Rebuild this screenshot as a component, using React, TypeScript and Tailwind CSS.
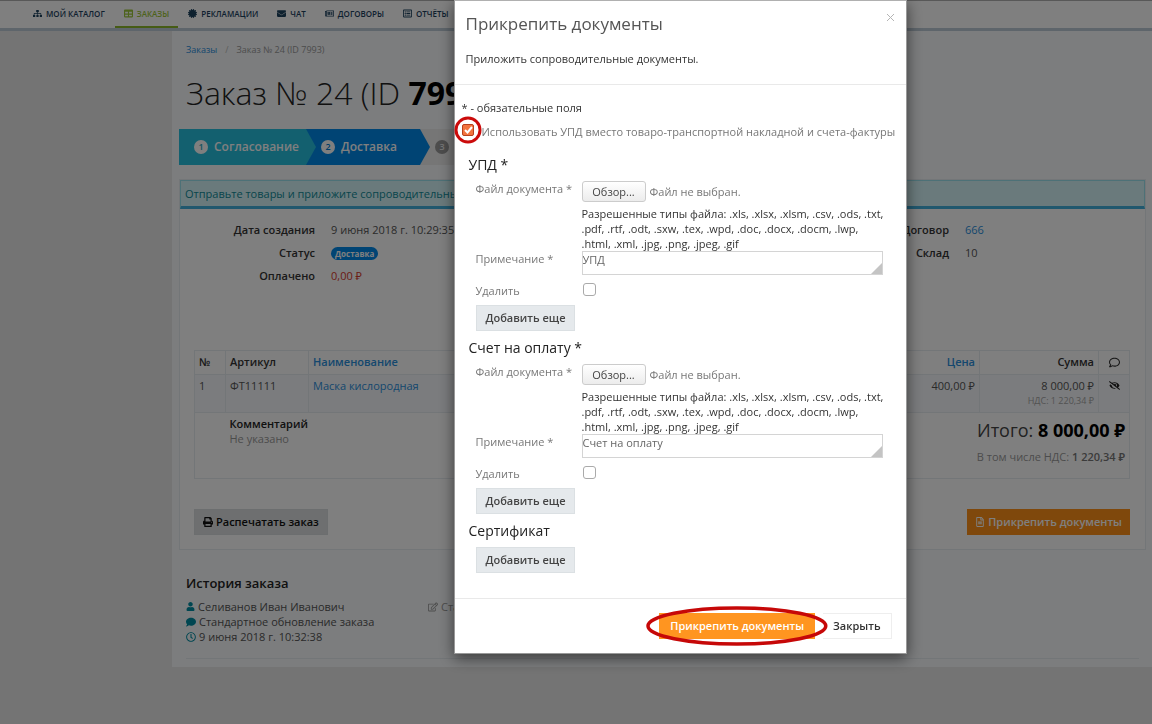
import React, { useRef } from 'react';
import {
  FaSitemap,
  FaTable,
  FaCertificate,
  FaEnvelope,
  FaRegNewspaper,
  FaRegComment,
  FaEyeSlash,
  FaPrint,
  FaRegFileAlt,
  FaUser,
  FaComment,
  FaRegClock,
  FaRegEdit,
  FaRegListAlt,
} from 'react-icons/fa';

const NAV = [
  { label: 'Мой каталог', icon: FaSitemap, active: false },
  { label: 'Заказы', icon: FaTable, active: true },
  { label: 'Рекламации', icon: FaCertificate, active: false },
  { label: 'Чат', icon: FaEnvelope, active: false },
  { label: 'Договоры', icon: FaRegNewspaper, active: false },
  { label: 'Отчёты', icon: FaRegListAlt, active: false },
];

function NavBar() {
  return (
    <nav className="border-t border-[#b0b0b0] border-b-[3px] border-b-[#bccad6] bg-white pl-6">
      <ul className="flex gap-px">
        {NAV.map(({ label, icon: Icon, active }) => (
          <li key={label}>
            <a
              href="#"
              className={
                active
                  ? 'flex h-[27px] items-center gap-1 border-b-2 border-[#8cb82b] px-[9px] text-[8px] font-semibold uppercase text-[#9dc73a]'
                  : 'flex h-[27px] items-center gap-1 border-b-2 border-transparent px-[9px] text-[8px] font-semibold uppercase text-[#1d425f]'
              }
            >
              <Icon className="size-[9px]" />
              {label}
            </a>
          </li>
        ))}
      </ul>
    </nav>
  );
}

function Steps() {
  return (
    <ol className="flex h-9 w-[728px] bg-[#ececec] text-xs font-semibold text-white">
      <li className="relative z-20 flex w-[127px] items-center gap-1.5 bg-[#27c0de] pl-[15px]">
        <span className="flex size-3.5 shrink-0 items-center justify-center rounded-full bg-white text-[9px] text-[#27a6bd]">1</span>
        Согласование
        <svg className="absolute left-full top-0 h-9 w-[10px]" viewBox="0 0 10 36" preserveAspectRatio="none">
          <path d="M0 0L10 18L0 36Z" fill="#27c0de" />
        </svg>
      </li>
      <li className="relative z-10 flex w-[114px] items-center gap-1.5 bg-[#0088e8] pl-[15px]">
        <span className="flex size-3.5 shrink-0 items-center justify-center rounded-full bg-white text-[9px] text-[#0078cf]">2</span>
        Доставка
        <svg className="absolute left-full top-0 h-9 w-[10px]" viewBox="0 0 10 36" preserveAspectRatio="none">
          <path d="M0 0L10 18L0 36Z" fill="#0088e8" />
        </svg>
      </li>
      <li className="flex items-center pl-[15px]">
        <span className="flex size-3.5 shrink-0 items-center justify-center rounded-full bg-[#9a9a9a] text-[9px] text-[#ececec]">3</span>
      </li>
    </ol>
  );
}

function OrderDetails() {
  return (
    <div className="flex justify-between pt-3 pb-[65px]">
      <dl className="grid grid-cols-[135px_auto] gap-x-4 gap-y-[5px] leading-[18px]">
        <dt className="text-right font-semibold text-[#333]">Дата создания</dt>
        <dd>9 июня 2018 г. 10:29:35</dd>
        <dt className="text-right font-semibold text-[#333]">Статус</dt>
        <dd className="flex items-center">
          <span className="rounded-full bg-[#0088e8] px-1 text-[8px] font-bold leading-[13px] text-white">Доставка</span>
        </dd>
        <dt className="text-right font-semibold text-[#333]">Оплачено</dt>
        <dd className="text-[#d63a2c]">0,00 ₽</dd>
      </dl>
      <dl className="grid grid-cols-[auto_180px] content-start gap-x-4 gap-y-[5px] leading-[18px]">
        <dt className="text-right font-semibold text-[#333]">Договор</dt>
        <dd>
          <a href="#" className="text-[#2a8fdc]">
            666
          </a>
        </dd>
        <dt className="text-right font-semibold text-[#333]">Склад</dt>
        <dd>10</dd>
      </dl>
    </div>
  );
}

function OrderTable() {
  return (
    <div className="pr-[15px] pl-[14px]">
      <table className="w-full border-collapse border border-[#e7ecf1] text-left">
        <thead>
          <tr className="h-6 border-b border-[#e7ecf1] text-[#333] [&>th]:border-r [&>th]:border-[#e7ecf1] [&>th]:px-1 [&>th]:font-semibold">
            <th className="w-[31px]">№</th>
            <th className="w-[83px]">Артикул</th>
            <th>
              <a href="#" className="text-[#2a8fdc]">
                Наименование
              </a>
            </th>
            <th className="w-[100px] text-right">
              <a href="#" className="text-[#2a8fdc]">
                Цена
              </a>
            </th>
            <th className="w-[119px] text-right">Сумма</th>
            <th className="w-[31px]">
              <FaRegComment className="mx-auto size-[11px]" />
            </th>
          </tr>
        </thead>
        <tbody>
          <tr className="h-[38px] bg-[#f7f9fc] align-top leading-[15px] [&>td]:border-r [&>td]:border-[#e7ecf1] [&>td]:px-1 [&>td]:pt-[3px]">
            <td>1</td>
            <td>ФТ11111</td>
            <td>
              <a href="#" className="text-[#2a8fdc]">
                Маска кислородная
              </a>
            </td>
            <td className="text-right">400,00 ₽</td>
            <td className="text-right">
              8 000,00 ₽<div className="text-[9px] text-[#a5a5a5]">НДС: 1 220,34 ₽</div>
            </td>
            <td>
              <FaEyeSlash className="mx-auto mt-[2px] size-[11px] text-[#222]" />
            </td>
          </tr>
          <tr className="h-[66px] border-t border-[#e7ecf1] align-top">
            <td />
            <td colSpan={2} className="px-1 pt-[3px] leading-[15px]">
              <div className="font-semibold text-[#222]">Комментарий</div>
              <div className="text-[#999]">Не указано</div>
            </td>
            <td colSpan={3} className="px-1 pt-[3px] text-right">
              <div className="text-lg leading-7 text-[#444]">
                Итого: <b className="text-black">8 000,00 ₽</b>
              </div>
              <div className="pt-[3px] leading-5 text-[#999]">
                В том числе НДС: <b className="font-semibold text-[#777]">1 220,34 ₽</b>
              </div>
            </td>
          </tr>
        </tbody>
      </table>
    </div>
  );
}

function OrderPage() {
  return (
    <main className="ml-[172px] bg-[#f8fafc] pr-[6px] pb-2 pl-[7px]">
      <ol className="flex gap-2 px-[7px] pt-3 text-[9px] leading-[14px]">
        <li>
          <a href="#" className="text-[#2a8fdc]">
            Заказы
          </a>
        </li>
        <li className="text-[#bbb]">/</li>
        <li className="text-[#999]">Заказ № 24 (ID 7993)</li>
      </ol>
      <h1 className="px-[7px] pt-4 pb-4 text-[32px] font-light leading-10 text-[#222]">
        Заказ № 24 (ID <b className="font-bold text-black">7993</b>)
      </h1>
      <Steps />
      <section className="mt-[14px] border border-[#e7ecf1] bg-white pb-[14px]">
        <p className="border border-b-[3px] border-[#9be3ee] border-b-[#41b0dd] bg-[#d5f5f8] px-1 leading-[25px] text-[#0f8a98]">
          Отправьте товары и приложите сопроводительные
        </p>
        <OrderDetails />
        <OrderTable />
        <div className="flex justify-between pt-[30px] pr-[15px] pl-[14px]">
          <button className="flex h-[26px] items-center gap-[3px] border border-[#d8dcde] bg-[#dcdfe0] px-2 font-semibold text-[#111]">
            <FaPrint className="size-[10px]" />
            Распечатать заказ
          </button>
          <button className="flex h-[26px] items-center gap-[3px] bg-[#ff9018] px-2 font-semibold text-white">
            <FaRegFileAlt className="size-[10px]" />
            Прикрепить документы
          </button>
        </div>
      </section>
      <section className="px-[7px] pt-[23px]">
        <h2 className="text-[13px] font-semibold leading-5 text-[#222]">История заказа</h2>
        <div className="flex border-b border-[#e7ecf1] pt-1.5 pb-[14px] leading-[15px]">
          <ul className="w-[242px]">
            <li className="flex items-center gap-[3px]">
              <FaUser className="size-[9px] text-[#008da3]" />
              Селиванов Иван Иванович
            </li>
            <li className="flex items-center gap-[3px]">
              <FaComment className="size-[10px] text-[#008da3]" />
              Стандартное обновление заказа
            </li>
            <li className="flex items-center gap-[3px]">
              <FaRegClock className="size-[10px] text-[#008da3]" />
              9 июня 2018 г. 10:32:38
            </li>
          </ul>
          <div className="flex h-[15px] items-center gap-[3px] text-[#999]">
            <FaRegEdit className="size-[10px]" />
            Статус
          </div>
        </div>
      </section>
    </main>
  );
}

function AddButton() {
  return (
    <button type="button" className="block h-[26px] border border-[#dbe0e3] bg-[#e5e9ec] px-[9px] font-semibold text-[#444]">
      Добавить еще
    </button>
  );
}

function DocumentFields({ id, title, note }: { id: string; title: string; note: string }) {
  const picker = useRef<HTMLInputElement>(null);
  return (
    <fieldset>
      <legend className="pl-[7px] text-sm leading-5 text-[#222]">{title} *</legend>
      <div className="grid grid-cols-[106px_1fr] pl-[14px] pt-[6px] pr-4 text-[#777]">
        <label htmlFor={`${id}-file`} className="leading-4">
          Файл документа *
        </label>
        <div>
          <div className="flex items-center gap-1 leading-5">
            <button
              id={`${id}-file`}
              type="button"
              onClick={() => picker.current?.click()}
              className="h-[21px] w-16 rounded-[3px] border border-[#ccc] bg-gradient-to-b from-white to-[#ececec] leading-4 text-[#444]"
            >
              Обзор...
            </button>
            <input ref={picker} type="file" className="hidden" />
            <span>Файл не выбран.</span>
          </div>
          <p className="-mr-1 pt-1 leading-[15px] text-[#333]">
            Разрешенные типы файла: .xls, .xlsx, .xlsm, .csv, .ods, .txt, .pdf, .rtf, .odt, .sxw, .tex, .wpd, .doc, .docx, .docm,
            .lwp, .html, .xml, .jpg, .png, .jpeg, .gif
          </p>
        </div>
        <label htmlFor={`${id}-note`} className="leading-4">
          Примечание *
        </label>
        <div className="relative h-6">
          <textarea
            id={`${id}-note`}
            defaultValue={note}
            className="block h-6 w-full resize-none overflow-hidden border border-[#d4d4d4] bg-white leading-4 text-[#666]"
          />
          <svg className="absolute right-px bottom-px size-[11px]" viewBox="0 0 11 11">
            <path d="M11 0V11H0Z" fill="#c4c4c4" />
          </svg>
        </div>
        <label htmlFor={`${id}-delete`} className="pt-2 leading-4">
          Удалить
        </label>
        <div className="pt-2">
          <input
            id={`${id}-delete`}
            type="checkbox"
            className="ml-px block size-[13px] appearance-none rounded-[3px] border border-[#aaa] bg-white"
          />
        </div>
      </div>
      <div className="pt-[6px] pb-[7px] pl-[14px]">
        <AddButton />
      </div>
    </fieldset>
  );
}

function AttachDialog() {
  return (
    <div
      role="dialog"
      aria-labelledby="dialog-title"
      className="w-[453px] border border-[#999] border-t-[#b0b0b0] bg-white text-[#333] shadow-[0_4px_14px_rgba(0,0,0,0.55)]"
    >
      <header className="border-b border-[#e9e9e9] px-[11px] pt-[9px] pb-[17px]">
        <div className="flex items-start justify-between">
          <h2 id="dialog-title" className="text-[17px] leading-7 text-[#555]">
            Прикрепить документы
          </h2>
          <button aria-label="Закрыть окно" className="pt-[3px] leading-4">
            <svg className="size-[9px]" viewBox="0 0 9 9" fill="none" stroke="#b5b5b5">
              <path d="M1 1L8 8M8 1L1 8" />
            </svg>
          </button>
        </div>
        <p className="pt-[13px] leading-4">Приложить сопроводительные документы.</p>
      </header>
      <form className="px-[7px] pt-[15px] pb-[25px]" onSubmit={(e) => e.preventDefault()}>
        <p className="leading-4">* - обязательные поля</p>
        <div className="flex items-start gap-2 pt-2 pb-[15px] text-[#777]">
          <div className="relative flex">
            <input
              id="use-upd"
              type="checkbox"
              defaultChecked
              className="size-3 appearance-none rounded-[2px] border border-[#b8401c] bg-[#f2743f]"
            />
            <svg className="pointer-events-none absolute -top-2 -left-2 h-7 w-7" viewBox="0 0 28 28" fill="none">
              <path d="M11 14L13.500 16.500L18 11" stroke="#fff" strokeWidth="2" />
              <circle cx="14" cy="14" r="12" stroke="#cb0b0b" strokeWidth="3" />
            </svg>
          </div>
          <label htmlFor="use-upd" className="leading-4 whitespace-nowrap">
            Использовать УПД вместо товаро-транспортной накладной и счета-фактуры
          </label>
        </div>
        <DocumentFields id="upd" title="УПД" note="УПД" />
        <DocumentFields id="invoice" title="Счет на оплату" note="Счет на оплату" />
        <h3 className="pl-[7px] text-sm leading-5 text-[#222]">Сертификат</h3>
        <div className="pt-[6px] pl-[14px]">
          <AddButton />
        </div>
      </form>
      <footer className="flex justify-end border-t border-[#e9e9e9] px-[14px] py-[14px]">
        <div className="relative">
          <button className="block h-[26px] bg-[#ff9520] px-[11px] font-semibold text-white">Прикрепить документы</button>
          <svg
            className="pointer-events-none absolute -inset-x-[13px] -top-[7px] h-10 w-[calc(100%+26px)]"
            viewBox="0 0 182 40"
            preserveAspectRatio="none"
            fill="none"
          >
            <ellipse cx="91" cy="20" rx="89" ry="18" stroke="#c60808" strokeWidth="3.500" />
          </svg>
        </div>
        <button className="ml-2 h-[26px] border border-l-0 border-[#eee] bg-white px-[10px] font-semibold">Закрыть</button>
      </footer>
    </div>
  );
}

export default function App() {
  return (
    <div className="min-h-screen bg-[#e8e8e8] font-['Open_Sans','Noto_Sans',sans-serif] text-[11px] text-[#555]">
      <NavBar />
      <OrderPage />
      <div className="fixed inset-0 z-50 flex items-start justify-center overflow-hidden bg-black/50 pl-52">
        <AttachDialog />
      </div>
    </div>
  );
}
